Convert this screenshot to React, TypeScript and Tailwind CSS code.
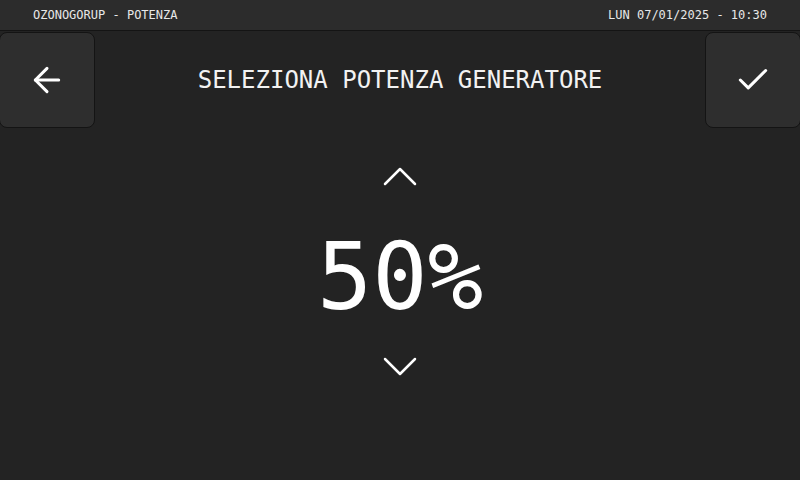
import { ArrowLeft, Check } from "lucide-react";

const mono = { fontFamily: '"DejaVu Sans Mono", "Liberation Mono", monospace' };

function Chevron({ up }: { up?: boolean }) {
	return (
		<svg width="34" height="20" viewBox="0 0 34 20" fill="none">
			<polyline
				points={up ? "2,18 17,3 32,18" : "2,2 17,17 32,2"}
				stroke="white"
				strokeWidth="2.5"
				strokeLinecap="round"
				strokeLinejoin="round"
			/>
		</svg>
	);
}

function SquareButton({ children }: { children: React.ReactNode }) {
	return (
		<button className="flex h-[96px] w-[96px] shrink-0 items-center justify-center rounded-lg border border-[#141414] bg-[#2e2e2e] text-white">
			{children}
		</button>
	);
}

export default function App() {
	return (
		<div className="flex h-[480px] w-[800px] flex-col overflow-hidden bg-[#232323] text-white" style={mono}>
			<div className="flex h-[31px] shrink-0 items-center justify-between border-b border-[#141414] bg-[#2c2c2c] px-[33px] text-[12px] text-[#e8e8e8]">
				<span>OZONOGORUP - POTENZA</span>
				<span>LUN 07/01/2025 - 10:30</span>
			</div>

			<div className="mt-px flex items-center justify-between">
				<div className="-ml-px">
					<SquareButton>
						<ArrowLeft size={40} strokeWidth={1.8} />
					</SquareButton>
				</div>
				<h1 className="text-[24px] tracking-normal text-[#f2f2f2]">SELEZIONA POTENZA GENERATORE</h1>
				<div className="-mr-px">
					<SquareButton>
						<Check size={38} strokeWidth={1.9} />
					</SquareButton>
				</div>
			</div>

			<div className="flex flex-col items-center">
				<div className="mt-[38px]">
					<Chevron up />
				</div>
				<div className="mt-[46px] text-[92px] leading-none">50%</div>
				<div className="mt-[33px]">
					<Chevron />
				</div>
			</div>
		</div>
	);
}
